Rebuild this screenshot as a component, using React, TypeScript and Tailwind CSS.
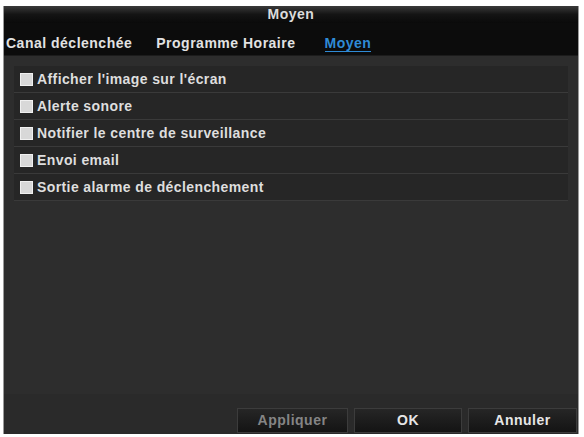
import React from "react";

const items = [
  "Afficher l'image sur l'écran",
  "Alerte sonore",
  "Notifier le centre de surveillance",
  "Envoi email",
  "Sortie alarme de déclenchement",
];

export default function App() {
  return (
    <div className="w-[584px] h-[437px] bg-white pt-[6px] pl-[3px] pr-[5px] pb-[3px]" style={{ fontFamily: '"Liberation Sans", Arial, sans-serif' }}>
      <div className="w-full h-full flex flex-col border-x border-[#9a9a9a] bg-[#2d2d2d]">
        <div className="h-[17px] flex items-center justify-center bg-gradient-to-b from-[#3a3a3a] via-[#141414] to-[#0a0a0a] text-[14px] tracking-[0.5px] font-bold text-[#dcdcdc]">
          Moyen
        </div>
        <div className="h-[33px] flex items-start pt-[12px] bg-[#0c0c0c] text-[14px] tracking-[0.5px] font-bold text-[#e2e2e2] border-b border-[#1c1c1c]">
          <span className="ml-[2px] leading-[16px]">Canal déclenchée</span>
          <span className="ml-[24px] leading-[16px]">Programme Horaire</span>
          <span className="ml-[29px] text-[#2f8bd6] border-b border-[#2f8bd6] leading-[16px]">Moyen</span>
        </div>
        <div className="flex-1 flex flex-col px-[10px] pt-[10px]">
          <div className="flex flex-col">
            {items.map((t) => (
              <div key={t} className="h-[27px] flex items-center bg-[#262626] border-b border-[#3a3a3a] pl-[6px]">
                <div className="w-[13px] h-[13px] bg-[#d8d8d8] border border-[#f0f0f0]" />
                <span className="ml-[4px] text-[14px] tracking-[0.4px] font-bold text-[#dedede]">{t}</span>
              </div>
            ))}
          </div>
          <div className="flex-1" />
        </div>
        <div className="h-[40px] flex items-end justify-end gap-[6px] pb-[1px] pr-[1px] bg-[#2a2a2a]">
          <button className="w-[111px] h-[25px] bg-gradient-to-b from-[#262626] to-[#141414] border border-[#3c3c3c] text-[14px] tracking-[0.5px] font-bold text-[#858585]">Appliquer</button>
          <button className="w-[108px] h-[25px] bg-gradient-to-b from-[#262626] to-[#141414] border border-[#3c3c3c] text-[14px] tracking-[0.5px] font-bold text-[#e6e6e6]">OK</button>
          <button className="w-[109px] h-[25px] bg-gradient-to-b from-[#262626] to-[#141414] border border-[#3c3c3c] text-[14px] tracking-[0.5px] font-bold text-[#e6e6e6]">Annuler</button>
        </div>
      </div>
    </div>
  );
}
